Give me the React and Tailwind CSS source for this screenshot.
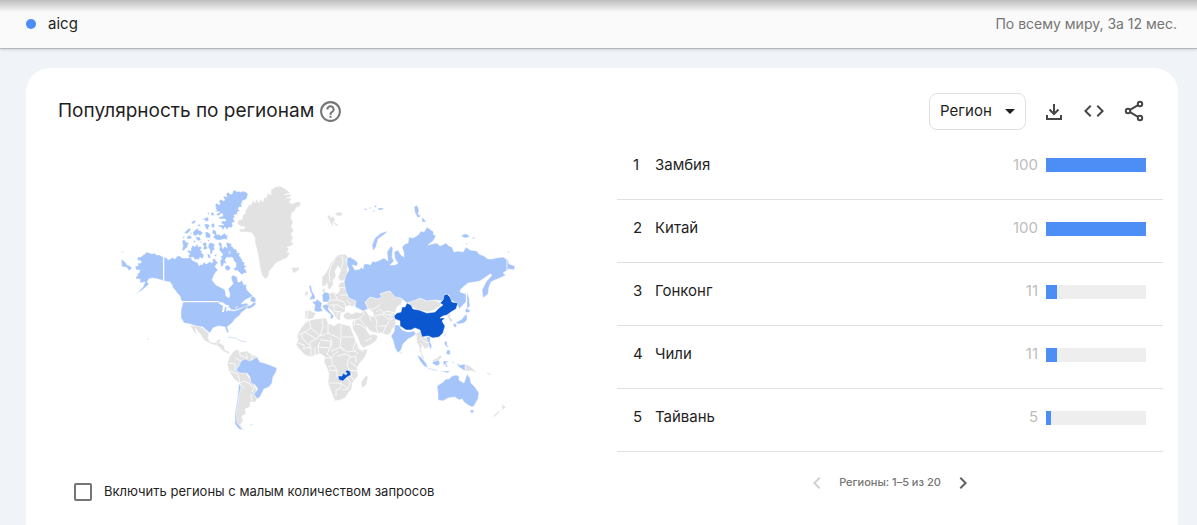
import { useState } from "react";
import { MdHelpOutline, MdCode, MdChevronLeft, MdChevronRight, MdArrowDropDown } from "react-icons/md";

const regions = [
  { name: "Замбия", value: 100 },
  { name: "Китай", value: 100 },
  { name: "Гонконг", value: 11 },
  { name: "Чили", value: 11 },
  { name: "Тайвань", value: 5 },
];

// Countries without data
const emptyLand = [
  // Greenland
  "M237 223L239 220 242 219 243 215 246 213 245 211 248 207 249 204 251 205 253 200 255 203 256 199 259 203 260 199 263 202 264 197 266 198 268 193 271 195 271 190 275 187 280 186 284 188 288 191 290 193 284 195 291 194 290 197 286 198 292 198 289 202 292 204 296 202 301 202 300 206 296 208 294 212 292 212 291 218 293 222 291 227 294 230 291 234 293 238 291 242 294 243 291 246 287 247 289 249 287 252 290 253 287 258 280 261 276 263 273 267 270 270 268 277 265 279 262 275 260 268 259 260 257 250 255 243 255 238 252 233 247 232 240 232 239 229 244 229 245 227 240 226Z",
  // Iceland, Svalbard
  "M291 269L293 267 295 268 299 267 299 270 294 273 292 272 293 270Z",
  "M327 216L330 215 331 218 333 216 335 219 334 222 339 225 336 226 333 222 333 228 331 224 329 220ZM335 213L339 212 343 213 341 216 337 216Z",
  // Scandinavia
  "M322 282L322 277 325 274 328 269 330 264 334 259 338 255 345 254 348 257 346 260 348 265 347 270 349 274 345 280 340 281 338 277 341 270 338 266 335 271 336 276 333 280 333 285 330 289 328 289 327 283 325 286 322 286Z",
  // Ireland, Spain, Portugal
  "M305 292L308 291 308 295 305 296Z",
  "M305 311L309 310 313 312 316 313 314 317 312 319 308 319 305 318Z",
  // Eastern Europe and the Balkans
  "M328 294L333 292 337 294 340 290 338 286 341 282 345 282 346 288 347 292 349 297 354 298 358 300 357 304 352 307 350 305 345 307 345 312 341 313 340 317 341 320 338 320 335 316 332 311 328 308 326 305 328 302 330 300ZM322 289L325 288 325 293 323 293Z",
  // Turkey and the Middle East
  "M343 315L347 312 352 314 356 312 361 313 362 310 366 311 369 315 374 317 373 312 368 309 365 302 370 297 378 299 382 297 380 294 385 292 390 291 394 294 399 297 403 298 401 304 397 307 395 313 398 318 395 321 396 326 392 329 391 333 387 335 381 333 376 333 370 331 366 326 367 331 370 335 374 334 378 336 376 341 370 345 363 348 360 344 357 336 353 329 352 323 354 319 348 320 344 318Z",
  // Mongolia
  "M408 302L412 298 416 300 420 298 427 301 435 300 441 303 440 306 434 310 428 312 418 310 412 307Z",
  // Korea, Indochina, Malaysia
  "M447 315L451 313 450 317 453 320 451 323 449 320Z",
  "M416 333L420 331 423 336 427 339 430 343 428 348 424 349 423 346 421 348 422 354 425 358 423 359 420 352 419 346 417 343Z",
  "M432 360L437 358 440 355 442 357 439 360 434 362Z",
  // Papua New Guinea, New Zealand
  "M465 364L470 366 473 369 477 372 471 371 465 371Z",
  "M502 404L506 407 503 410 502 408ZM501 409L498 414 494 417 493 416Z",
  // Africa
  "M305 323L308 321 315 319 326 318 328 323 334 326 338 323 350 326 352 331 355 339 358 346 361 350 368 349 365 357 360 363 357 368 358 376 352 383 352 388 349 392 345 398 340 400 335 401 332 394 328 383 329 374 327 368 324 362 325 357 321 354 315 355 311 357 305 355 300 350 296 345 298 340 297 335 301 328Z",
  "M362 388L361 383 363 379 367 375 368 378 366 385Z",
  // Mexico and Central America
  "M190 325L195 326 200 326 204 329 206 331 209 333 208 338 210 342 215 343 217 340 221 339 219 343 224 345 225 350 230 352 229 354 223 351 218 346 211 344 204 340 201 335 195 328 197 335 194 332Z",
  // South America
  "M230 356L233 352 237 349 240 352 247 351 251 354 258 357 258 361 249 366 247 375 251 380 257 390 255 394 257 398 256 402 250 402 250 407 245 409 246 414 242 416 243 421 240 425 244 430 239 429 235 423 235 412 237 402 239 390 239 383 234 379 229 371 227 363Z",
];

// Countries with low search interest
const lowLand = [
  // Alaska
  "M164 257L161 256 160 255 157 255 154 253 152 254 150 253 146 252 145 254 143 255 141 257 138 257 137 260 141 261 141 263 138 263 138 266 135 266 136 270 140 270 139 273 137 274 138 276 136 276 136 279 140 279 140 283 145 282 143 287 139 291 134 294 141 291 147 286 149 284 147 282 149 279 152 278 158 279 164 281Z",
  // Chukotka tail
  "M121 259L124 261 126 263 127 265 130 266 132 268 129 271 128 269 126 267 122 267ZM122 251L124 252 122 253Z",
  // Canada
  "M164 257L167 258 168 260 170 259 173 257 174 259 176 258 177 256 180 256 182 258 188 258 191 257 192 260 194 261 196 262 198 263 199 266 201 264 202 265 204 262 206 264 208 263 210 261 211 263 213 262 212 260 215 258 216 261 218 262 217 264 215 266 216 268 218 270 216 272 214 275 212 280 216 285 222 288 225 290 226 296 229 298 230 294 228 289 233 284 231 277 233 275 237 277 238 282 240 282 242 280 243 283 244 285 247 284 246 287 247 290 251 294 253 296 249 298 245 300 241 304 247 303 249 306 252 304 255 301 256 304 253 307 249 309 244 307 239 309 232 311 230 308 225 306 219 302 183 302 181 300 180 296 177 293 175 290 173 288 172 285 170 282 164 281Z",
  "M251 297L253 296 256 299 255 303 250 301Z",
  // Arctic archipelago
  "M182 241L183 240 185 240 186 242 189 243 188 245 187 248 185 249 184 251 182 250 183 246Z",
  "M187 251L189 250 191 251 191 248 193 245 195 247 196 245 198 244 198 247 200 246 202 248 200 250 203 251 201 252 203 254 204 256 202 259 200 257 199 260 197 259 195 260 193 257 190 258 188 256 190 254Z",
  "M213 207L215 209 216 208 215 205 217 203 219 205 220 204 219 201 221 199 223 201 225 200 223 197 224 196 227 197 226 194 228 192 230 194 232 194 233 191 235 190 237 192 238 191 241 192 243 191 246 192 248 194 247 198 245 200 242 201 243 204 241 203 242 207 239 207 238 209 240 211 237 212 238 214 234 215 235 218 233 218 235 222 232 223 233 226 231 228 229 227 227 230 225 227 223 230 221 227 218 227 219 225 224 225 221 223 222 221 226 221 225 219 219 219 219 217 223 216 222 213 218 216 216 214 220 212 214 211 217 210Z",
  "M213 229L216 231 217 235 219 234 221 236 223 234 225 233 226 235 228 236 227 238 228 240 224 239 221 240 217 240 215 239 213 237 215 235 212 233Z",
  "M183 234L186 231 188 229 190 228 191 230 189 232 187 234 185 233ZM191 223L193 221 196 220 195 223 193 224ZM193 232L196 229 199 228 198 230 201 231 203 233 200 236 198 234 196 236 193 235ZM202 219L208 217 209 220 206 222 205 220ZM204 224L208 224 210 226 208 228 210 230 206 229ZM195 237L200 237 201 240 198 241ZM205 232L208 232 211 235 210 238 206 238ZM187 237L189 235 192 237 191 239 187 239ZM190 232L192 233 191 235ZM197 225L200 224 201 227 198 226ZM211 224L214 223 215 227 212 228ZM199 243L201 241 203 242ZM193 240L196 241 194 243ZM183 236L185 237 183 239ZM207 240L210 240 209 242Z",
  "M202 244L205 242 207 244 206 246 208 248 205 250 203 249 204 246ZM209 243L213 243 215 245 214 247 215 250 213 250 212 254 210 254 210 250 208 247ZM214 216L211 215 211 212 214 213ZM207 213L209 212 209 215ZM207 253L210 255 211 258 208 258Z",
  "M218 243L220 242 222 244 222 247 223 249 224 246 227 248 226 242 229 243 232 244 231 246 233 247 234 249 237 249 236 251 238 251 237 253 240 253 239 256 241 257 241 259 243 259 242 261 245 263 244 265 247 267 244 268 246 270 247 273 244 273 242 275 240 273 237 270 236 271 233 269 236 267 236 263 234 261 233 258 231 257 229 258 227 257 225 260 227 264 224 263 223 266 221 267 220 261 222 258 220 257 223 255 221 252 219 250 220 247Z",
  "M225 266L228 265 231 268 228 271 225 269ZM229 251L231 253 229 254ZM214 255L217 254 216 257Z",
  // United States
  "M183 302L219 302 225 304 227 307 226 311 230 310 234 311 240 309 248 305 246 309 241 313 240 315 235 319 232 323 227 327 229 332 227 333 225 327 218 326 213 328 210 333 206 330 203 327 196 326 190 324 184 323 181 318 181 310Z",
  // Brazil and Chile
  "M236 370L239 366 241 361 245 359 250 361 257 357 260 362 264 363 270 365 277 368 276 372 273 377 272 383 269 387 264 389 260 397 257 399 254 394 258 389 255 385 251 383 250 377 247 373 240 373Z",
  "M239 383L241 387 239 395 238 404 236 413 237 423 243 430 239 429 235 424 235 413 237 403Z",
  // United Kingdom, France, Germany, Italy
  "M309 286L311 285 312 291 315 296 315 299 309 300 312 295 310 291Z",
  "M312 302L316 301 317 299 322 303 321 308 323 311 318 312 314 311 315 305Z",
  "M322 295L325 292 329 293 330 299 328 302 323 302Z",
  "M322 306L326 304 329 306 328 309 332 314 334 316 332 319 330 318 331 315 325 310Z",
  // Russia
  "M347 258L350 257 355 260 358 263 357 266 352 265 355 270 360 269 361 267 363 269 364 264 368 264 370 265 373 261 375 262 380 260 384 258 388 261 387 252 391 246 393 248 392 257 394 261 390 265 395 265 398 263 395 259 394 252 398 250 401 255 404 257 404 253 402 247 405 244 408 243 409 237 413 238 418 235 421 231 424 232 427 227 431 230 434 232 433 234 436 236 433 241 428 245 432 244 437 243 440 246 446 243 449 246 452 247 454 252 458 251 463 252 466 247 470 250 477 251 479 254 484 256 488 259 492 259 496 258 503 257 508 260 509 264 515 266 514 270 509 269 503 273 506 275 500 278 495 280 491 282 489 287 488 294 483 298 482 290 486 282 492 275 490 274 486 277 480 281 475 282 468 283 461 289 460 292 466 294 466 302 459 309 457 303 450 300 449 295 445 294 443 301 435 300 427 301 420 298 416 300 407 303 401 298 395 297 390 291 385 292 380 294 382 297 378 299 370 297 365 302 368 309 363 311 355 307 356 301 349 298 346 292 344 282 346 275 349 270 347 265Z",
  "M373 251L372 245 375 238 381 233 388 231 385 234 378 239 376 247Z",
  "M414 207L417 205 419 210 418 214 421 216 418 218 415 213ZM422 217L425 220 426 222 422 222ZM461 236L464 234 467 234 470 237 465 238ZM472 237L476 238 473 239ZM466 243L468 244 466 245ZM507 251L510 252 508 253Z",
  "M363 210L366 208 367 210ZM369 207L372 208 370 209ZM374 206L377 205 376 208ZM378 208L384 208 382 210 378 210ZM372 211L376 210 374 212Z",
  "M467 292L469 298 470 306 467 309 467 300Z",
  // Japan, Philippines, Taiwan
  "M466 308L471 311 467 313 465 311Z",
  "M467 314L467 320 464 323 459 324 455 323 462 319 464 316ZM454 323L457 325 455 328 453 325Z",
  "M444 342L447 341 447 345 449 347 447 347 445 345ZM447 350L450 350 450 355 446 354ZM444 335L446 333 445 337Z",
  // India, Vietnam
  "M395 325L399 325 402 330 408 332 414 331 416 334 412 337 408 339 403 344 401 350 398 353 395 348 393 340 391 336 394 332Z",
  "M426 337L430 337 430 342 432 346 430 350 429 345Z",
  // Indonesia
  "M417 355L421 357 426 363 428 368 424 366 420 361ZM428 368L437 370 437 371 428 369ZM432 362L439 360 440 364 437 366 433 364ZM443 361L449 361 446 363 448 367 446 367 445 364 444 367ZM456 363L460 365 465 364 465 371 459 367ZM440 371L450 371 448 373ZM452 361L454 362 453 364Z",
  // Australia and Tasmania
  "M437 386L443 382 446 379 449 379 452 376 456 375 459 376 459 380 464 383 467 374 470 378 471 383 475 387 479 393 478 399 474 406 472 407 468 405 464 402 462 399 459 400 455 397 448 398 443 401 438 400 438 394Z",
  "M470 410L474 410 473 413 471 413Z",
];

const topLand = [
  // China
  "M394 316L397 313 401 312 402 307 405 307 407 303 411 305 413 309 419 310 427 313 435 312 439 308 443 305 440 303 443 300 444 295 447 294 450 297 452 302 458 303 456 309 451 312 447 315 443 316 440 318 445 318 442 321 445 326 443 333 439 337 433 338 428 336 422 337 420 330 415 328 411 330 406 330 400 326 400 321 395 319Z",
  // Zambia
  "M338 376L342 376 343 373 346 375 347 373 345 372 347 370 350 371 351 375 347 377 343 381 339 380Z",
];

const borders = [
  // North and South America
  "M228 363L235 364 235 370M235 358L241 361M239 352L241 356 247 358M230 371L238 374 240 383M240 383L243 381 249 383 254 388 252 392M239 383L244 388M251 394L252 401M246 353L248 359M252 354L252 360M217 340L217 345",
  // Europe
  "M335 259L331 266 329 273 330 282M342 256L343 263 341 268M334 293L338 300 330 300M338 287L345 288M340 295L348 295M338 300L344 302 346 307M330 305L338 305 344 309M334 305L334 311 341 312M338 311L337 317M346 300L351 304M308 310L307 318",
  // Middle East and Central Asia
  "M353 320L359 319 364 314 362 311M356 324L361 325 366 329M360 319L365 326M371 321L369 314M375 317L377 321 376 327 378 333M375 316L382 314 388 319 393 319M376 312L380 309 386 315 393 314M368 309L374 309 380 305M383 315L386 311 395 313M378 326L386 326 390 320M386 326L383 333M365 341L372 338M355 320L354 326M390 315L391 318",
  // North and West Africa
  "M309 321L311 328 305 332 298 335M302 333L302 338 309 345M305 332L316 339 310 342 310 348M311 328L320 336 316 339M322 319L323 327 320 336 328 333 341 339M328 323L328 333M341 325L341 337 353 337M320 340L330 341 331 348M341 338L340 347 344 351M298 343L304 345 304 350M305 348L311 347 311 356M315 347L315 355M318 346L319 355M320 342L318 347 330 348M330 348L327 354 332 358M331 338L332 346",
  // Central and South Africa
  "M331 351L341 347 347 352 356 351M356 340L353 349 358 354M356 347L364 352M332 357L338 351M325 358L332 358 332 364M328 367L334 365 337 371M337 356L345 354 350 356 347 364 349 370M350 357L356 356 356 363M350 362L358 368M329 383L341 383M329 370L337 371 337 377M348 370L357 371M350 372L352 376M347 378L350 382 348 389M341 383L341 388 336 390 336 396M341 383L347 388M342 390L348 389M350 376L354 380",
  // Indochina
  "M420 338L425 342 429 343M420 343L424 347",
  // Antimeridian
  "M507 258L507 271",
];

function WorldMap() {
  return (
    <svg viewBox="110 180 410 260" className="w-[410px] max-w-full" role="img" aria-label="Карта мира">
      <g stroke="#fff" strokeWidth="0.5" strokeLinejoin="round">
        {emptyLand.map((d, i) => <path key={i} d={d} fill="#e2e2e2" />)}
        {lowLand.map((d, i) => <path key={i} d={d} fill="#a4c4fa" />)}
      </g>
      <g fill="none" stroke="#fff" strokeWidth="0.8">
        {borders.map((d, i) => <path key={i} d={d} />)}
      </g>
      <g fill="none" stroke="#fff" strokeWidth="1">
        <path d="M163.500 256V282M183 301.500H219" />
      </g>
      {topLand.map((d, i) => <path key={i} d={d} fill="#0b57d0" stroke="#fff" strokeWidth="0.5" />)}
      {/* Great Lakes */}
      <path d="M218 303L222 302 226 305 229 305 228 308 225 307 224 312 222 312 223 306ZM230 311L234 309 233 311ZM236 307L239 306 235 309Z" fill="#fff" />
      {/* Faint islands */}
      <path d="M147 339h2M228 337L235 338 241 341 247 342M250 425h3M401 352v2M487 373l4 2" fill="none" stroke="#d7e2f5" strokeWidth="1" />
    </svg>
  );
}

function DownloadIcon() {
  return (
    <svg viewBox="0 0 24 24" className="size-6" fill="none" stroke="currentColor" strokeWidth="2">
      <path d="M12 5v10M7.500 10.500l4.500 4.500 4.500-4.500M5 16v4h14v-4" />
    </svg>
  );
}

function ShareIcon() {
  return (
    <svg viewBox="0 0 24 24" className="size-6" fill="none" stroke="currentColor" strokeWidth="2">
      <circle cx="6" cy="12" r="2.200" />
      <circle cx="18" cy="5" r="2.200" />
      <circle cx="18" cy="19" r="2.200" />
      <path d="M8 10.900l8-4.700M8 13.100l8 4.700" />
    </svg>
  );
}

export default function App() {
  const [lowVolume, setLowVolume] = useState(false);

  return (
    <div className="flex min-h-screen flex-col bg-[#f0f4f9] font-[Inter,sans-serif] text-[#1f1f1f]">
      {/* Search term bar */}
      <header className="flex h-[49px] items-center justify-between border-b border-[#b4b8bb] bg-[#fafafa] bg-linear-to-b from-[#bdbdbd] to-[#fafafa] to-25% pr-5 pl-[26px] text-[15px] shadow-sm">
        <div className="flex items-center gap-3">
          <span className="size-2.5 rounded-full bg-[#4c8df6]"></span>
          <span>aicg</span>
        </div>
        <span className="text-sm text-[#757575]">По всему миру, За 12 мес.</span>
      </header>

      <main className="mt-[19px] mr-[19px] ml-[26px] flex-grow rounded-t-3xl bg-white">
        {/* Card header */}
        <div className="flex h-[68px] items-center justify-between px-8 pt-[18px]">
          <div className="flex items-center gap-1">
            <h1 className="text-[19px]">Популярность по регионам</h1>
            <button aria-label="Справка" className="text-[#757575]">
              <MdHelpOutline className="size-[25px]" />
            </button>
          </div>
          <div className="flex items-center gap-4 text-[#444746]">
            <div className="relative">
              <select
                aria-label="Уровень"
                className="h-[37px] w-[97px] appearance-none rounded-lg border border-[#e0e0e0] bg-white pl-2.5 text-[15px] text-[#1f1f1f]"
              >
                <option>Регион</option>
              </select>
              <MdArrowDropDown className="pointer-events-none absolute top-1.5 right-1 size-6 text-[#1f1f1f]" />
            </div>
            <button aria-label="Скачать"><DownloadIcon /></button>
            <button aria-label="Код для вставки"><MdCode className="size-6" /></button>
            <button aria-label="Поделиться"><ShareIcon /></button>
          </div>
        </div>

        <div className="flex">
          {/* Map */}
          <div className="flex-1 pt-11">
            <div className="pl-[84px]">
              <WorldMap />
            </div>
            <label className="mt-[42px] ml-12 flex items-center gap-3 text-[13px]">
              <input
                type="checkbox"
                checked={lowVolume}
                onChange={(e) => setLowVolume(e.target.checked)}
                className="size-[18px] appearance-none rounded-xs border-2 border-[#757575] checked:bg-[#0b57d0]"
              />
              Включить регионы с малым количеством запросов
            </label>
          </div>

          {/* Region list */}
          <div className="mr-[15px] w-[47.4%]">
            <table className="w-full border-collapse text-[15px]">
              <tbody>
                {regions.map((region, index) => (
                  <tr key={region.name} className="h-[63px] border-b border-[#e0e0e0]">
                    <td className="w-[38px] pb-1 pl-4">{index + 1}</td>
                    <td className="pb-1">{region.name}</td>
                    <td className="pr-2 pb-1 text-right text-[#bdbdbd]">{region.value}</td>
                    <td className="w-[117px] pr-[17px] pb-1">
                      <div className="h-3.5 bg-[#eeeeee]">
                        <div className="h-full bg-[#4c8df6]" style={{ width: `${region.value}%` }}></div>
                      </div>
                    </td>
                  </tr>
                ))}
              </tbody>
            </table>
            <nav className="flex h-[62px] items-center justify-center gap-2.5 text-[11px] font-medium text-[#757575]">
              <button aria-label="Назад" disabled className="text-[#d0d0d0]">
                <MdChevronLeft className="size-6" />
              </button>
              <span>Регионы: 1–5 из 20</span>
              <button aria-label="Вперёд" className="text-[#616161]">
                <MdChevronRight className="size-6" />
              </button>
            </nav>
          </div>
        </div>
      </main>
    </div>
  );
}
